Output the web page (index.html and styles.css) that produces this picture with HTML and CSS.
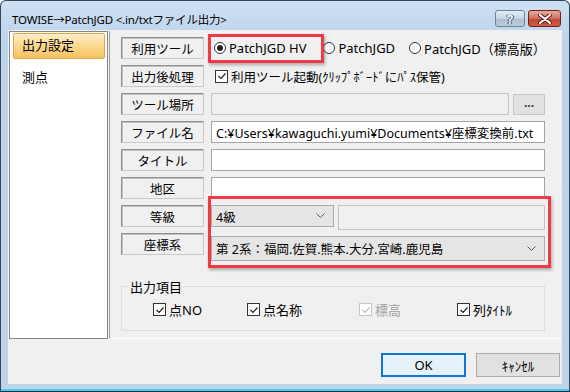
FILE: index.html
```html
<!DOCTYPE html>
<html lang="ja">
<head>
  <meta charset="UTF-8" />
  <title>TOWISE→PatchJGD</title>
  <link rel="stylesheet" href="styles.css">
</head>
<body>

  <div class="window">
    <!-- タイトルバー -->
    <div class="titlebar">
      <span class="title">TOWISE→PatchJGD &lt;.in/txtファイル出力&gt;</span>
      <div class="caption-btns">
        <span class="cap-btn help">?</span>
        <span class="cap-btn close">
          <svg width="14" height="10" viewBox="0 0 14 10">
            <path d="M2 1 L12 9 M12 1 L2 9" stroke="#5a1a12" stroke-width="4" stroke-linecap="round" />
            <path d="M2 1 L12 9 M12 1 L2 9" stroke="#fff" stroke-width="2.2" stroke-linecap="round" />
          </svg>
        </span>
      </div>
    </div>

    <div class="client">
      <div class="main">
        <!-- 左メニュー -->
        <div class="sidebar">
          <div class="side-item selected">出力設定</div>
          <div class="side-item">測点</div>
        </div>

        <!-- 設定パネル -->
        <div class="panel">
          <div class="form">
            <div class="label">利用ツール</div>
            <div class="ctrl radios">
              <span class="radio on"><i></i>PatchJGD HV</span>
              <span class="radio"><i></i>PatchJGD</span>
              <span class="radio"><i></i>PatchJGD（標高版）</span>
            </div>

            <div class="label">出力後処理</div>
            <div class="ctrl">
              <span class="check small"><i><svg width="10" height="10" viewBox="0 0 10 10"><path d="M1.5 5 L4 7.5 L8.5 2.5" fill="none" stroke="#222" stroke-width="1.2" /></svg></i>利用ツール起動(ｸﾘｯﾌﾟﾎﾞｰﾄﾞにﾊﾟｽ保管)</span>
            </div>

            <div class="label">ツール場所</div>
            <div class="ctrl">
              <div class="input disabled"></div>
              <div class="dots-btn">...</div>
            </div>

            <div class="label">ファイル名</div>
            <div class="ctrl">
              <div class="input">C:¥Users¥kawaguchi.yumi¥Documents¥座標変換前.txt</div>
            </div>

            <div class="label">タイトル</div>
            <div class="ctrl"><div class="input"></div></div>

            <div class="label">地区</div>
            <div class="ctrl"><div class="input"></div></div>

            <div class="label">等級</div>
            <div class="ctrl">
              <div class="combo short">4級<svg class="chev" width="9" height="6" viewBox="0 0 9 6"><path d="M0.5 0.5 L4.5 4.5 L8.5 0.5" fill="none" stroke="#555" stroke-width="1" /></svg></div>
              <div class="input disabled tall"></div>
            </div>

            <div class="label">座標系</div>
            <div class="ctrl">
              <div class="combo wide">第 2系：福岡.佐賀.熊本.大分.宮崎.鹿児島<svg class="chev" width="9" height="6" viewBox="0 0 9 6"><path d="M0.5 0.5 L4.5 4.5 L8.5 0.5" fill="none" stroke="#555" stroke-width="1" /></svg></div>
            </div>
          </div>

          <fieldset class="group">
            <legend>出力項目</legend>
            <div class="checks">
              <span class="check"><i><svg width="10" height="10" viewBox="0 0 10 10"><path d="M1.5 5 L4 7.5 L8.5 2.5" fill="none" stroke="#222" stroke-width="1.2" /></svg></i>点NO</span>
              <span class="check"><i><svg width="10" height="10" viewBox="0 0 10 10"><path d="M1.5 5 L4 7.5 L8.5 2.5" fill="none" stroke="#222" stroke-width="1.2" /></svg></i>点名称</span>
              <span class="check off"><i><svg width="10" height="10" viewBox="0 0 10 10"><path d="M1.5 5 L4 7.5 L8.5 2.5" fill="none" stroke="#bbb" stroke-width="1.2" /></svg></i>標高</span>
              <span class="check"><i><svg width="10" height="10" viewBox="0 0 10 10"><path d="M1.5 5 L4 7.5 L8.5 2.5" fill="none" stroke="#222" stroke-width="1.2" /></svg></i>列ﾀｲﾄﾙ</span>
            </div>
          </fieldset>
        </div>
      </div>

      <!-- ボタン -->
      <div class="footer">
        <div class="btn default">OK</div>
        <div class="btn">ｷｬﾝｾﾙ</div>
      </div>
    </div>

    <!-- 赤枠 -->
    <div class="mark mark-tool"></div>
    <div class="mark mark-grade"></div>
  </div>

</body>
</html>
```

FILE: styles.css
```css
body {
  margin: 0;
  font-family: "Noto Sans", "Noto Sans CJK JP", sans-serif;
  font-size: 12px;
  color: #000;
  background: #fff;
}

.window {
  position: relative;
  width: 570px;
  height: 392px;
  box-sizing: border-box;
  border: 1px solid #34475c;
  border-bottom-color: #1d2a36;
  border-radius: 6px 6px 0 0;
  background: linear-gradient(#cfe0f2, #bcd3ea 40px, #bed4eb);
  padding: 0 7px 7px;
  display: flex;
  flex-direction: column;
  box-shadow: inset 0 -2px 0 #3fd0f0;
}

.titlebar {
  height: 29px;
  display: flex;
  align-items: center;
  padding-top: 6px;
  box-sizing: border-box;
}

.title {
  padding-left: 4px;
  font-size: 11.5px;
  letter-spacing: -0.2px;
}

.caption-btns {
  margin-left: auto;
  margin-right: 1px;
  display: flex;
  gap: 3px;
}

.cap-btn {
  height: 17px;
  box-sizing: border-box;
  border-radius: 3px;
  display: flex;
  align-items: center;
  justify-content: center;
}

.help {
  width: 30px;
  border: 1px solid #6f8194;
  background: linear-gradient(#e4edf6, #c5d5e6 50%, #aebfd2 51%, #bccbdb);
  color: #fff;
  font-weight: bold;
  font-size: 13px;
  text-shadow: 0 0 1px #33475c, 0 0 1px #33475c, 1px 0 0 #33475c, -1px 0 0 #33475c;
}

.close {
  width: 33px;
  border: 1px solid #6b2318;
  background: linear-gradient(#e9a99c, #d26e5c 50%, #c2422d 51%, #cf5a44);
}

.client {
  flex: 1;
  background: #f0f0f0;
  padding: 1px;
  display: flex;
  flex-direction: column;
}

.main {
  display: flex;
  height: 308px;
}

.sidebar {
  width: 100px;
  box-sizing: border-box;
  background: #fff;
  border: 1px solid #828790;
  padding: 1px 2px 0 3px;
}

.side-item {
  height: 24px;
  line-height: 23px;
  padding-left: 8px;
  margin-bottom: 6px;
  font-size: 13px;
  border: 1px solid transparent;
}

.side-item.selected {
  background: linear-gradient(#fdefc6, #fad58a 55%, #f6c160);
  border-color: #e2a54a;
  border-radius: 2px;
}

.panel {
  flex: 1;
  margin-left: 1px;
  border-left: 1px solid #a0a0a0;
  border-bottom: 1px solid #fff;
  padding: 6px 16px 0 11px;
}

.form {
  display: grid;
  grid-template-columns: 83px 1fr;
  grid-auto-rows: 22px;
  column-gap: 7px;
  row-gap: 6px;
}

.label {
  box-sizing: border-box;
  border: 1px solid;
  border-color: #8e8e8e #c9c9c9 #c9c9c9 #8e8e8e;
  box-shadow: inset 1px 1px 0 #c2c2c2;
  display: flex;
  align-items: center;
  justify-content: center;
  font-size: 12.5px;
}

.ctrl {
  display: flex;
  align-items: center;
  min-width: 0;
}

.radios {
  padding-left: 3px;
}

.radio {
  display: flex;
  align-items: center;
  margin-right: 12px;
  font-size: 13px;
  white-space: nowrap;
}

.radio:first-child {
  margin-right: 17px;
}

.radio:nth-child(2) {
  margin-right: 14px;
}

.radio i {
  width: 12px;
  height: 12px;
  box-sizing: border-box;
  border: 1px solid #333;
  border-radius: 50%;
  background: #fff;
  margin-right: 3px;
  display: flex;
  align-items: center;
  justify-content: center;
}

.radio.on i::after {
  content: "";
  width: 6px;
  height: 6px;
  border-radius: 50%;
  background: #222;
}

.check {
  display: flex;
  align-items: center;
  font-size: 13px;
  white-space: nowrap;
  padding-left: 4px;
}

.check.small {
  font-size: 12.5px;
}

.check i {
  width: 13px;
  height: 13px;
  box-sizing: border-box;
  border: 1px solid #333;
  background: #fff;
  margin-right: 3px;
  display: flex;
  align-items: center;
  justify-content: center;
}

.check.off {
  color: #a0a0a0;
}

.check.off i {
  border-color: #c6c6c6;
}

.input {
  flex: 1;
  height: 22px;
  box-sizing: border-box;
  border: 1px solid #a5a5a5;
  background: #fff;
  padding-left: 4px;
  display: flex;
  align-items: center;
  font-size: 12.5px;
  white-space: nowrap;
  overflow: hidden;
}

.input.disabled {
  background: #f0f0f0;
  border-color: #c3c3c3;
}

.input.tall {
  height: 25px;
  align-self: flex-start;
}

.dots-btn {
  width: 32px;
  height: 21px;
  box-sizing: border-box;
  margin-left: 4px;
  border: 1px solid #c6c6c6;
  background: #e1e1e1;
  text-align: center;
  line-height: 15px;
  font-weight: bold;
  color: #333;
}

.combo {
  height: 22px;
  box-sizing: border-box;
  border: 1px solid #acacac;
  background: #e5e5e5;
  padding: 0 8px 0 4px;
  display: flex;
  align-items: center;
  font-size: 12.5px;
  white-space: nowrap;
  align-self: flex-start;
}

.combo.short {
  width: 123px;
  margin-right: 4px;
}

.combo.wide {
  flex: 1;
  height: 25px;
  margin-top: 3px;
}

.chev {
  margin-left: auto;
}

.group {
  margin: 22px 0 0 0;
  width: 424px;
  box-sizing: border-box;
  border: 1px solid #dcdcdc;
  padding: 4px 0 11px 31px;
  min-width: 0;
}

.group legend {
  padding: 0 2px;
  margin-left: -25px;
  font-size: 13px;
}

.checks {
  display: grid;
  grid-template-columns: 94px 112px 98px auto;
}

.checks .check {
  padding-left: 0;
}

.footer {
  flex: 1;
  display: flex;
  justify-content: flex-end;
  align-items: flex-start;
  gap: 10px;
  padding: 14px 1px 0 0;
}

.btn {
  width: 84px;
  height: 24px;
  box-sizing: border-box;
  border: 1px solid #adadad;
  background: #e1e1e1;
  display: flex;
  align-items: center;
  justify-content: center;
  font-size: 13px;
}

.btn.default {
  width: 85px;
  border: 2px solid #0d78d4;
  background: #e5f1fb;
}

/* 強調用の赤枠 */
.mark {
  position: absolute;
  border: 3px solid #ee3b43;
  box-shadow: 1px 2px 3px rgba(0, 0, 0, 0.3);
}

.mark-tool {
  left: 207px;
  top: 33px;
  width: 110px;
  height: 23px;
}

.mark-grade {
  left: 207px;
  top: 195px;
  width: 337px;
  height: 66px;
}
```
